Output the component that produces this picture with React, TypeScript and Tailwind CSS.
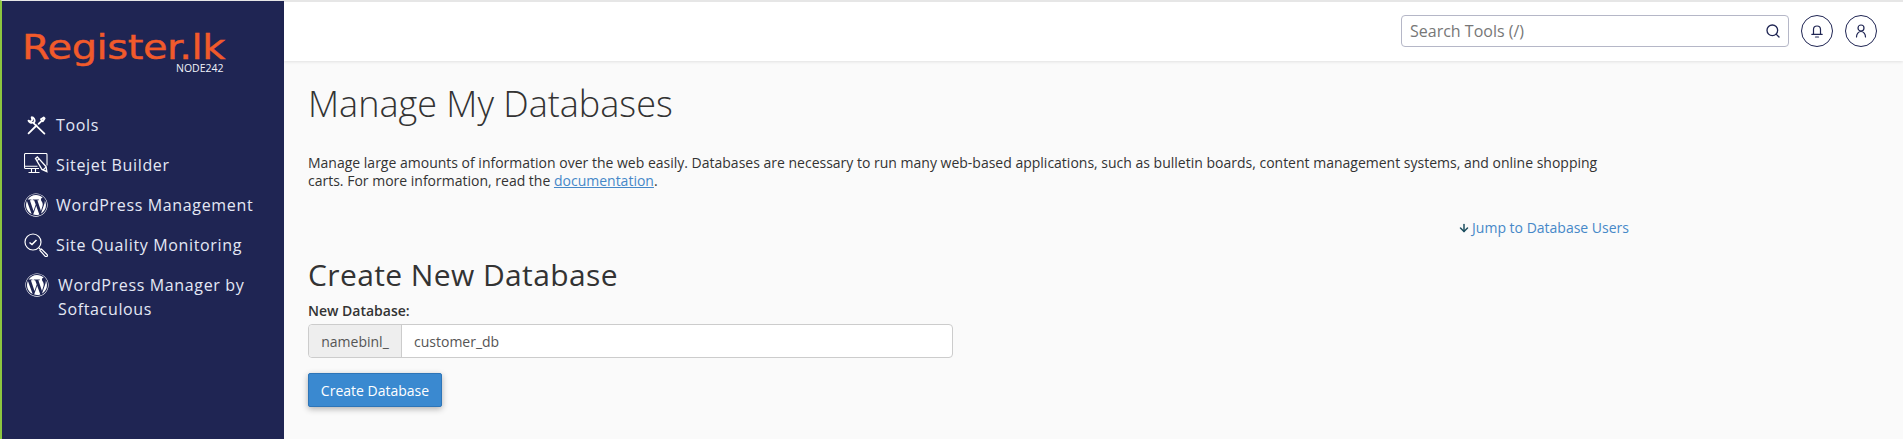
import React from 'react';
import { Search, ArrowDown } from 'lucide-react';
import { FaWordpress } from 'react-icons/fa';

const ToolsIcon = () => (
  <svg viewBox="0 0 18 18" className="w-[19px] h-[19px]" fill="none" stroke="currentColor" strokeWidth="1.7" strokeLinecap="round" strokeLinejoin="round">
    <path d="M1.500 4.500a3.200 3.200 0 0 0 4.200 1.700L16.500 16.600" />
    <path d="M1.500 4.500L3.800 5.200 5 3.800 4.400 1.200a3.200 3.200 0 0 1 2.800 4l-.6 1" />
    <path d="M1.500 16.500L9 9" />
    <path d="M11 7.500l3.400-3.400M13.200 3l2.600-1.600.9.9L15 5z" />
  </svg>
);

const SitejetIcon = () => (
  <svg viewBox="0 0 24 24" className="w-[24px] h-[24px]" fill="none" stroke="currentColor" strokeWidth="1.1">
    <path d="M15 15.500H1.500a1 1 0 0 1-1-1V1.500a1 1 0 0 1 1-1h20.500a1 1 0 0 1 1 1v11" />
    <path d="M.8 13.200h12.700M7.500 15.500v3.500M11.500 15.500v3.500M4.500 19.500h11" />
    <path d="M11.500 5.500l1.800-1.600 8.700 9.600.8 5-4.800-2z" strokeWidth="1.4" />
    <path d="M13.200 7.500l2-1.700M19 17l3-2.800" />
  </svg>
);

const QualityIcon = () => (
  <svg viewBox="0 0 24 24" className="w-[24px] h-[24px]" fill="none" stroke="currentColor" strokeWidth="1.2">
    <circle cx="9" cy="9" r="8" />
    <path d="M5.500 9.500l2.500 2 4.500-4.500" strokeWidth="1.6" />
    <path d="M15 15l1.500 1.500" />
    <path d="M16 17.500l1.500-1.500 5.500 5.500a1.200 1.200 0 0 1-1.800 1.800z" />
  </svg>
);

const BellIcon = () => (
  <svg viewBox="0 0 16 16" className="w-[16px] h-[16px]" fill="none" stroke="currentColor" strokeWidth="1.2" strokeLinecap="round">
    <path d="M4.500 11V6.500a3.500 3.500 0 0 1 7 0V11" />
    <path d="M2.800 11.300h10.400" />
    <path d="M6.500 14h3" />
  </svg>
);

const UserIcon = () => (
  <svg viewBox="0 0 16 16" className="w-[16px] h-[16px]" fill="none" stroke="currentColor" strokeWidth="1.2" strokeLinecap="round">
    <circle cx="8" cy="5" r="3" />
    <path d="M3.500 14c0-3 2-5.500 4.500-5.500s4.500 2.500 4.500 5.500" />
  </svg>
);

const NavItem: React.FC<{ icon: React.ReactNode; label: string; indent?: boolean }> = ({ icon, label, indent }) => (
  <a className={`flex items-start text-[16px] leading-[24px] tracking-[0.65px] text-[#e4e8f5] ${indent ? 'pl-[23px]' : 'pl-[22px]'}`}>
    <span className="w-[24px] h-[24px] shrink-0 flex items-center justify-center text-white">{icon}</span>
    <span className={indent ? 'ml-[9px] w-[200px]' : 'ml-[8px]'}>{label}</span>
  </a>
);

export default function App() {
  return (
    <div className="flex h-[439px] overflow-hidden bg-[#fafafa] font-['Open_Sans',sans-serif] text-[#333]">
      <aside className="w-[284px] shrink-0 bg-[#1f2553] border-l-2 border-[#8cc63f] border-t border-t-[#e6e6e6]">
        <div className="h-[100px] pl-[20px] pt-[29px] relative">
          <div className="w-[167px] origin-left scale-x-[1.21] font-['DejaVu_Sans',sans-serif] text-[33px] leading-[36px] text-[#f15a2b] tracking-[-0.35px] [-webkit-text-stroke:0.4px_#f15a2b]">Register.lk</div>
          <div className="absolute left-[174px] top-[61px] text-[10.5px] leading-[12px] text-[#f0f2fa]">NODE242</div>
        </div>
        <nav className="flex flex-col gap-[16px] pt-[12px]">
          <NavItem icon={<ToolsIcon />} label="Tools" />
          <NavItem icon={<SitejetIcon />} label="Sitejet Builder" />
          <NavItem icon={<FaWordpress className="w-[24px] h-[24px]" />} label="WordPress Management" />
          <NavItem icon={<QualityIcon />} label="Site Quality Monitoring" />
          <NavItem icon={<FaWordpress className="w-[24px] h-[24px]" />} label="WordPress Manager by Softaculous" indent />
        </nav>
      </aside>
      <div className="flex-1 min-w-0">
        <header className="h-[61px] pb-[1px] bg-white border-t-2 border-[#e6e6e6] shadow-[0_1px_3px_rgba(0,0,0,0.1)] flex items-center justify-end pr-[26px] gap-[12px]">
          <div className="w-[388px] h-[32px] border border-[#b5b7c7] rounded-[4px] bg-white flex items-center justify-between pl-[8px] pr-[7px]">
            <span className="text-[16px] text-[#777]">Search Tools (/)</span>
            <Search className="w-[16px] h-[16px] text-[#1f2553]" />
          </div>
          <div className="w-[32px] h-[32px] rounded-full border border-[#1f2553] flex items-center justify-center text-[#1f2553]">
            <BellIcon />
          </div>
          <div className="w-[32px] h-[32px] rounded-full border border-[#1f2553] flex items-center justify-center text-[#1f2553]">
            <UserIcon />
          </div>
        </header>
        <main className="pl-[24px] pt-[21px]">
          <h1 className="text-[36px] leading-[44px] font-light">Manage My Databases</h1>
          <p className="mt-[28px] w-[1300px] text-[14px] leading-[18px]">
            Manage large amounts of information over the web easily. Databases are necessary to run many web-based applications, such as bulletin boards, content management systems, and online shopping carts. For more information, read the <a className="text-[#4688c8] underline">documentation</a>.
          </p>
          <div className="mt-[28px] w-[1321px] flex justify-end items-center text-[14px] leading-[20px] text-[#4688c8]">
            <ArrowDown className="w-[12px] h-[12px] mr-[2px] text-[#1d4f60]" strokeWidth={3} />Jump to Database Users
          </div>
          <h2 className="mt-[17px] text-[30px] leading-[40px] font-medium tracking-[0.4px]">Create New Database</h2>
          <label className="block mt-[6px] text-[14px] leading-[20px] font-semibold">New Database:</label>
          <div className="mt-[3px] flex w-[645px] h-[34px] border border-[#ccc] rounded-[4px] bg-white text-[14px] text-[#555]">
            <span className="w-[93px] bg-[#eee] border-r border-[#ccc] rounded-l-[4px] flex items-center justify-center">namebinl_</span>
            <span className="pl-[12px] flex items-center">customer_db</span>
          </div>
          <button className="mt-[15px] block w-[134px] h-[34px] bg-[#3a89d0] border border-[#2d75b8] rounded-[2px] text-white text-[14px] shadow-[0_2px_6px_rgba(0,0,0,0.3)]">Create Database</button>
        </main>
      </div>
    </div>
  );
}
